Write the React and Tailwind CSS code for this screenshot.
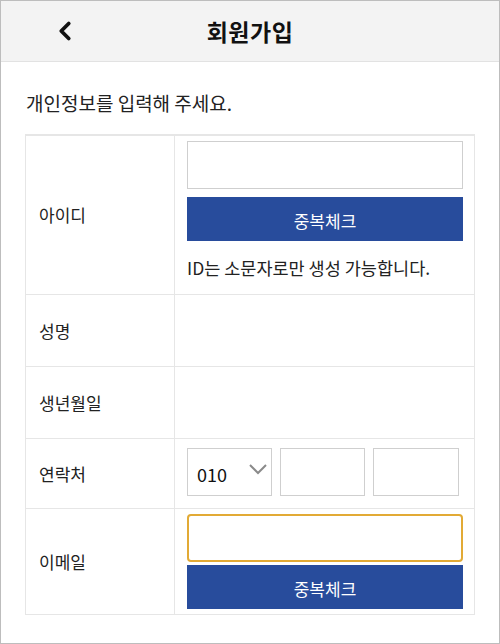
import { ChevronLeft } from 'lucide-react';

const FONT = "font-['Noto_Sans_CJK_KR','Noto_Sans',sans-serif]";

function Row({ label, height, children }) {
  return (
    <div className={`flex border-b border-[#e6e6e6] ${height}`}>
      <div className="w-[149px] shrink-0 border-r border-[#e6e6e6] flex items-center">
        <span className="w-[13px] shrink-0" />
        <span className="text-[17px] text-[#222]">{label}</span>
      </div>
      <div className="flex-1 flex">
        <span className="w-3 shrink-0" />
        <div className="flex-1">{children}</div>
      </div>
    </div>
  );
}

function CheckButton() {
  return (
    <button className="w-[276px] h-[44px] bg-[#284c9c] text-white text-[17px] flex items-center justify-center pt-[3px]">
      중복체크
    </button>
  );
}

export default function App() {
  return (
    <div className={`w-[500px] h-[644px] border border-[#bdbdbd] bg-white ${FONT}`}>
      {/* Header */}
      <div className="h-[61px] bg-[#f3f3f3] border-b border-[#e2e2e2] grid grid-cols-[1fr_auto_1fr] items-center">
        <div className="pl-[49px] flex items-center">
          <ChevronLeft size={30} strokeWidth={3} className="text-[#111]" />
        </div>
        <h1 className="text-[23px] font-bold text-[#111] tracking-[0.5px]">회원가입</h1>
        <div />
      </div>

      <p className="mt-[27px] ml-[25px] text-[19px] leading-[28px] text-[#222]">개인정보를 입력해 주세요.</p>

      {/* Form table */}
      <div className="mt-[17px] ml-[24px] w-[450px] border-t-2 border-l border-r border-[#e6e6e6]">
        <Row label="아이디" height="h-[159px]">
          <div className="pt-[5px] flex flex-col">
            <div className="w-[276px] h-[48px] border border-[#cfcfcf] bg-white" />
            <div className="mt-[8px]">
              <CheckButton />
            </div>
            <p className="mt-[14px] text-[17.5px] leading-[26px] text-[#222]">ID는 소문자로만 생성 가능합니다.</p>
          </div>
        </Row>
        <Row label="성명" height="h-[72px]" />
        <Row label="생년월일" height="h-[72px]" />
        <Row label="연락처" height="h-[70px]">
          <div className="pt-[9px] flex gap-[8px]">
            <div className="w-[85px] h-[48px] border border-[#cfcfcf] flex items-center justify-between pl-[9px] pr-[3px]">
              <span className="text-[18px] text-[#111] pt-[5px]">010</span>
              <svg width="20" height="12" viewBox="0 0 20 12" className="-mt-[6px]">
                <path d="M2 2 L10 10 L18 2" fill="none" stroke="#8a8a8a" strokeWidth="2" />
              </svg>
            </div>
            <div className="w-[85px] h-[48px] border border-[#cfcfcf]" />
            <div className="w-[86px] h-[48px] border border-[#cfcfcf]" />
          </div>
        </Row>
        <Row label="이메일" height="h-[106px]">
          <div className="pt-[5px] flex flex-col">
            <div className="w-[276px] h-[48px] border-2 border-[#e2aa35] rounded-[4px] bg-white" />
            <div className="mt-[3px]">
              <CheckButton />
            </div>
          </div>
        </Row>
      </div>
    </div>
  );
}
